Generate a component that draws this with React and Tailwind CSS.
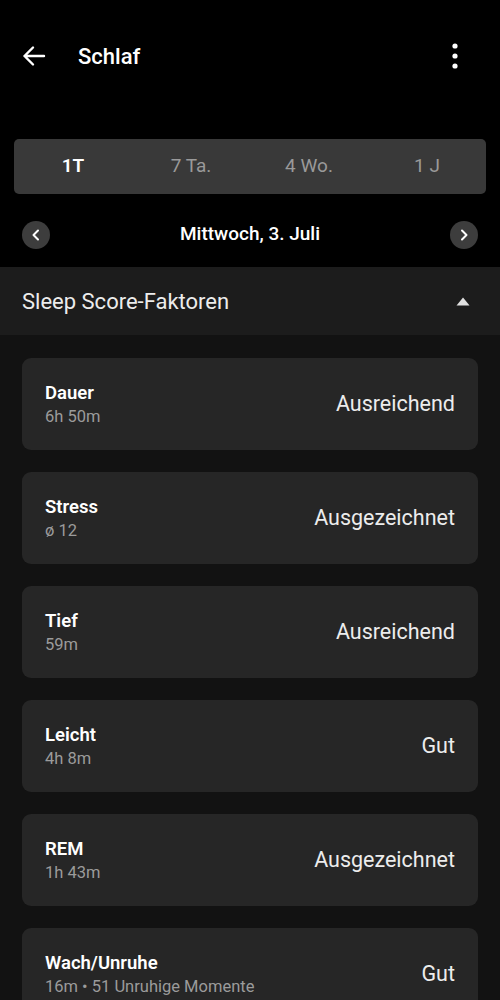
const factors = [
  { title: 'Dauer', sub: '6h 50m', rating: 'Ausreichend' },
  { title: 'Stress', sub: 'ø 12', rating: 'Ausgezeichnet' },
  { title: 'Tief', sub: '59m', rating: 'Ausreichend' },
  { title: 'Leicht', sub: '4h 8m', rating: 'Gut' },
  { title: 'REM', sub: '1h 43m', rating: 'Ausgezeichnet' },
  { title: 'Wach/Unruhe', sub: '16m • 51 Unruhige Momente', rating: 'Gut' },
];

const ranges = ['1T', '7 Ta.', '4 Wo.', '1 J'];

function RoundNav({ dir }) {
  return (
    <button className="flex h-[28px] w-[28px] items-center justify-center rounded-full bg-[#3d3d3d]">
      <svg width="14" height="14" viewBox="0 0 14 14" fill="none">
        <path
          d={dir === 'left' ? 'M9 2.5 4.5 7 9 11.5' : 'M5 2.5 9.5 7 5 11.5'}
          stroke="#fff"
          strokeWidth="2"
          strokeLinecap="round"
          strokeLinejoin="round"
        />
      </svg>
    </button>
  );
}

function FactorCard({ title, sub, rating }) {
  return (
    <li className="flex h-[92px] items-center justify-between rounded-[9px] bg-[#262626] px-[23px]">
      <div className="flex flex-col">
        <p className="text-[18.5px] leading-[24px] font-semibold text-white">{title}</p>
        <p className="mt-[2px] text-[16.5px] leading-[20px] text-[#9b9b9b]">{sub}</p>
      </div>
      <p className="text-[21.5px] text-[#ececec]">{rating}</p>
    </li>
  );
}

export default function App() {
  return (
    <div className="min-h-[1000px] w-[500px] overflow-hidden bg-black font-['Roboto',sans-serif]">
      <header className="mt-[28px] flex h-[56px] items-center px-[22px]">
        <svg width="24" height="24" viewBox="0 0 24 24" fill="none">
          <path
            d="M22 12H2.5M11 3.5 2.5 12l8.5 8.5"
            stroke="#fff"
            strokeWidth="2.4"
            strokeLinecap="round"
            strokeLinejoin="round"
          />
        </svg>
        <h1 className="ml-[32px] text-[22px] font-medium text-white">Schlaf</h1>
        <svg className="ml-auto mr-[20px]" width="6" height="26" viewBox="0 0 6 26" fill="#fff">
          <circle cx="3" cy="3" r="2.6" />
          <circle cx="3" cy="13" r="2.6" />
          <circle cx="3" cy="23" r="2.6" />
        </svg>
      </header>

      <div className="mx-[14px] mt-[55px] grid h-[55px] grid-cols-4 rounded-[5px] bg-[#393939]">
        {ranges.map((r, i) => (
          <div
            key={r}
            className={`flex items-center justify-center text-[19px] ${
              i === 0 ? 'font-semibold text-white' : 'text-[#9a9a9a]'
            }`}
          >
            {r}
          </div>
        ))}
      </div>

      <div className="flex h-[73px] items-center justify-between px-[22px] pt-[8px]">
        <RoundNav dir="left" />
        <p className="text-[19px] font-medium text-white">Mittwoch, 3. Juli</p>
        <RoundNav dir="right" />
      </div>

      <div className="flex h-[68px] items-center justify-between bg-[#1c1c1c] px-[22px]">
        <h2 className="text-[22px] text-[#ececec]">Sleep Score-Faktoren</h2>
        <svg className="mr-[8px]" width="14" height="9" viewBox="0 0 14 9" fill="#e0e0e0">
          <path d="M7 0.5 13.5 8.5H0.5Z" />
        </svg>
      </div>

      <ul className="flex flex-col gap-[22px] bg-[#121212] px-[22px] pt-[23px] pb-[40px]">
        {factors.map((f) => (
          <FactorCard key={f.title} {...f} />
        ))}
      </ul>
    </div>
  );
}
